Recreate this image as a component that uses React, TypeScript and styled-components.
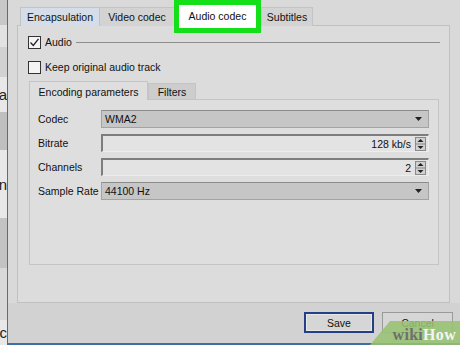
import React from 'react';
import styled, { createGlobalStyle } from 'styled-components';

const GlobalStyle = createGlobalStyle`
    * { box-sizing: border-box; }
    html, body { margin: 0; padding: 0; background: #d9d9d9; }
    body {
        font-family: "Liberation Sans", Arial, sans-serif;
        font-size: 10.5px;
        color: #111;
    }
`

const rows = [
    { label: 'Codec', kind: 'combo', value: 'WMA2' },
    { label: 'Bitrate', kind: 'spin', value: '128 kb/s' },
    { label: 'Channels', kind: 'spin', value: '2' },
    { label: 'Sample Rate', kind: 'combo', value: '44100 Hz' },
]

const strip = [
    { h: 25, c: '#c8c8c8', g: '' },
    { h: 22, c: '#e2e2e2', g: '' },
    { h: 30, c: '#d2d2d2', g: '' },
    { h: 35, c: '#e8e8e8', g: 'a' },
    { h: 38, c: '#bfbfbf', g: '' },
    { h: 68, c: '#e8e8e8', g: 'n' },
    { h: 50, c: '#c3c3c3', g: '' },
    { h: 52, c: '#d8d8d8', g: '' },
    { h: 25, c: '#e8e8e8', g: 'c' },
]

const DownArrow = () => (
    <svg width="7" height="4" viewBox="0 0 7 4">
        <path d="M0 0 L7 0 L3.5 4 Z" fill="#222"/>
    </svg>
)

const Spinner = () => (
    <SpinBtns>
        <svg width="9" height="14" viewBox="0 0 9 14">
            <path d="M1.5 5 L7.5 5 L4.5 2 Z" fill="#222"/>
            <line x1="0" y1="7" x2="9" y2="7" stroke="#8a8a8a" strokeWidth="1"/>
            <path d="M1.5 9 L7.5 9 L4.5 12 Z" fill="#222"/>
        </svg>
    </SpinBtns>
)

const App = () => {
    return (
        <Screen>
            <GlobalStyle/>
            <Strip>
                {strip.map((s, i) => (
                    <StripBlock key={i} $h={s.h} $c={s.c}>{s.g}</StripBlock>
                ))}
            </Strip>
            <Window>
                <TabBar>
                    <Tab $w={80} $tone="blue">Encapsulation</Tab>
                    <Tab $w={76}>Video codec</Tab>
                    <HighlightTab>Audio codec</HighlightTab>
                    <Tab $w={52}>Subtitles</Tab>
                </TabBar>
                <Pane>
                    <CheckRow>
                        <Check $checked>
                            <svg width="11" height="11" viewBox="0 0 11 11">
                                <path d="M1.5 5.5 L4.3 8.5 L9.5 1.8" fill="none" stroke="#222" strokeWidth="1.3"/>
                            </svg>
                        </Check>
                        <span>Audio</span>
                        <GroupLine/>
                    </CheckRow>
                    <CheckRow $gap={11}>
                        <Check/>
                        <span>Keep original audio track</span>
                    </CheckRow>
                    <InnerTabs>
                        <InnerTabBar>
                            <InnerTab $w={119} $active>Encoding parameters</InnerTab>
                            <InnerTab $w={48}>Filters</InnerTab>
                        </InnerTabBar>
                        <InnerPane>
                            {rows.map(r => (
                                <FormRow key={r.label}>
                                    <FieldLabel>{r.label}</FieldLabel>
                                    {r.kind === 'combo' ? (
                                        <Combo>
                                            <span>{r.value}</span>
                                            <DownArrow/>
                                        </Combo>
                                    ) : (
                                        <Spin>
                                            <SpinValue>{r.value}</SpinValue>
                                            <Spinner/>
                                        </Spin>
                                    )}
                                </FormRow>
                            ))}
                        </InnerPane>
                    </InnerTabs>
                </Pane>
                <Footer>
                    <Button $primary>Save</Button>
                    <Button>Cancel</Button>
                </Footer>
            </Window>
            <Watermark>
                <svg width="90" height="24" viewBox="0 0 90 24">
                    <path d="M0 24 L20 0 L90 0 L90 24 Z" fill="#97c271" fillOpacity="0.88"/>
                </svg>
                <WatermarkText>
                    <WikiPart>wiki</WikiPart>How
                </WatermarkText>
            </Watermark>
        </Screen>
    )
}

const Screen = styled.div`
    position: relative;
    display: flex;
    width: 460px;
    height: 345px;
    overflow: hidden;
`

const Strip = styled.div`
    display: flex;
    flex-direction: column;
    width: 7px;
    flex-shrink: 0;
    overflow: hidden;
`

const StripBlock = styled.div<{ $h: number; $c: string }>`
    height: ${p => p.$h}px;
    background: ${p => p.$c};
    display: flex;
    align-items: center;
    justify-content: flex-end;
    font-size: 15px;
    color: #222;
    line-height: 1;
    white-space: nowrap;
`

const Window = styled.div`
    flex: 1;
    display: flex;
    flex-direction: column;
    background: #d9d9d9;
    border-left: 1px solid #4a6f9c;
    border-bottom: 2px solid #3f6ea3;
`

const TabBar = styled.div`
    display: flex;
    height: 19px;
    margin-top: 7px;
    padding-left: 12px;
    position: relative;
    z-index: 2;
`

const Tab = styled.div<{ $w: number; $tone?: string }>`
    width: ${p => p.$w}px;
    display: flex;
    align-items: center;
    justify-content: center;
    background: ${p => p.$tone === 'blue' ? '#d5dee8' : '#d3d3d3'};
    border: 1px solid #c3c3c3;
    border-bottom: none;
    margin-right: -1px;
`

const HighlightTab = styled.div`
    width: 87px;
    height: 33px;
    margin-top: -7px;
    display: flex;
    align-items: center;
    justify-content: center;
    background: #ffffff;
    border: 5px solid #14e01a;
    padding-bottom: 2px;
`

const Pane = styled.div`
    height: 278px;
    margin: -1px 10px 0 9px;
    padding: 9px 9px 0 10px;
    background: #dcdcdc;
    border: 1px solid #c0c0c0;
    display: flex;
    flex-direction: column;
`

const CheckRow = styled.div<{ $gap?: number }>`
    display: flex;
    align-items: center;
    gap: 4px;
    height: 14px;
    margin-top: ${p => p.$gap || 0}px;
`

const Check = styled.div<{ $checked?: boolean }>`
    width: 13px;
    height: 13px;
    border: 1px solid #333;
    background: #f4f4f4;
    display: flex;
    align-items: center;
    justify-content: center;
`

const GroupLine = styled.div`
    flex: 1;
    height: 1px;
    background: #8e8e8e;
    margin-right: 0;
`

const InnerTabs = styled.div`
    margin: 7px 1px 0 1px;
    display: flex;
    flex-direction: column;
`

const InnerTabBar = styled.div`
    display: flex;
    align-items: flex-end;
    height: 19px;
    position: relative;
    z-index: 1;
`

const InnerTab = styled.div<{ $w: number; $active?: boolean }>`
    width: ${p => p.$w}px;
    height: ${p => p.$active ? 19 : 17}px;
    display: flex;
    align-items: center;
    justify-content: center;
    background: ${p => p.$active ? '#dedede' : '#cdcdcd'};
    border: 1px solid #c4c4c4;
    border-bottom: ${p => p.$active ? 'none' : '1px solid #c4c4c4'};
    padding-top: 1px;
`

const InnerPane = styled.div`
    height: 166px;
    margin-top: -1px;
    padding: 10px 9px 0 8px;
    background: #dedede;
    border: 1px solid #c4c4c4;
    display: flex;
    flex-direction: column;
    gap: 6px;
`

const FormRow = styled.div`
    display: flex;
    align-items: center;
    height: 18px;
`

const FieldLabel = styled.div`
    width: 63px;
    flex-shrink: 0;
`

const Combo = styled.div`
    flex: 1;
    height: 18px;
    display: flex;
    align-items: center;
    justify-content: space-between;
    padding: 0 6px 0 3px;
    background: #c6c6c6;
    border: 1px solid #a3a3a3;
    border-top-color: #8c8c8c;
`

const Spin = styled.div`
    flex: 1;
    height: 18px;
    display: flex;
    align-items: center;
    justify-content: flex-end;
    padding-right: 2px;
    background: #e3e3e3;
    border: 1px solid #ededed;
    border-top: 2px solid #7d7d7d;
    border-left: 2px solid #7d7d7d;
`

const SpinValue = styled.span`
    margin-right: 4px;
`

const SpinBtns = styled.div`
    width: 11px;
    height: 14px;
    display: flex;
    border: 1px solid #8a8a8a;
    background: #d0d0d0;
    align-items: center;
    justify-content: center;
`

const Footer = styled.div`
    flex: 1;
    display: flex;
    justify-content: flex-end;
    align-items: flex-start;
    gap: 8px;
    padding: 9px 7px 0 0;
    background: #d2d2d2;
`

const Button = styled.div<{ $primary?: boolean }>`
    width: ${p => p.$primary ? 70 : 71}px;
    height: 21px;
    display: flex;
    align-items: center;
    justify-content: center;
    background: #d6d6d6;
    border: ${p => p.$primary ? '2px solid #243f86' : '1px solid #9a9a9a'};
    box-shadow: ${p => p.$primary ? 'inset 0 0 0 1px #e8e8e8' : 'none'};
`

const Watermark = styled.div`
    position: absolute;
    right: 0;
    bottom: 0;
    width: 90px;
    height: 24px;
    svg { position: absolute; left: 0; top: 0; }
`

const WatermarkText = styled.div`
    position: absolute;
    right: 4px;
    bottom: 1px;
    font-family: "Liberation Serif", "Times New Roman", serif;
    font-weight: bold;
    font-size: 16px;
    color: #f4f4f4;
    letter-spacing: 0.3px;
`

const WikiPart = styled.span`
    color: #6f6f6f;
`

export default App;
